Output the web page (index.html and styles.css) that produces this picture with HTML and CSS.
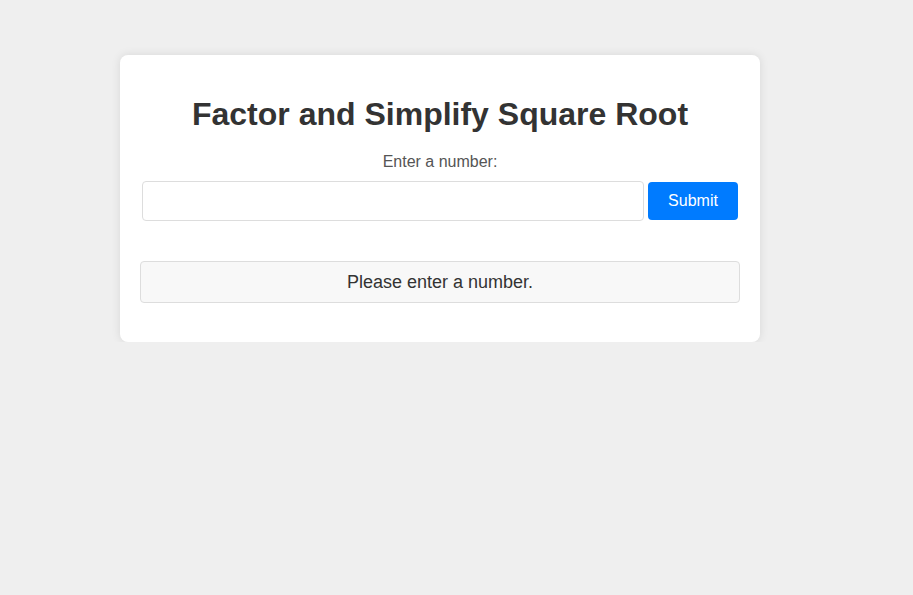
FILE: index.html
```html
<!DOCTYPE html>
<html>
<head>
<meta charset="utf-8">
<link rel="stylesheet" href="styles.css">
</head>
<body>
<div class="card">
  <h1 class="title">Factor and Simplify Square Root</h1>
  <label class="label" for="num">Enter a number:</label>
  <div class="row">
    <input class="input" id="num" type="text">
    <button class="btn">Submit</button>
  </div>
  <div class="result">Please enter a number.</div>
</div>
</body>
</html>
```
FILE: styles.css
```css
html, body {
  margin: 0;
  background: #efefef;
  font-family: "Liberation Sans", Arial, sans-serif;
}
body {
  padding-top: 55px;
}
.card {
  width: 600px;
  margin-left: 120px;
  padding: 20px;
  background: #fff;
  border-radius: 8px;
  box-shadow: 0 0 10px rgba(0, 0, 0, 0.1);
  text-align: center;
  color: #333;
}
.title {
  font-size: 32px;
  font-weight: bold;
  margin: 21px 0 20px;
  line-height: 37px;
  color: #333;
}
.label {
  display: block;
  font-size: 16px;
  color: #555;
  line-height: 18px;
  margin-bottom: 10px;
}
.row {
  display: flex;
  align-items: center;
  gap: 4px;
  padding: 0 2px;
}
.input {
  flex: 1;
  height: 40px;
  box-sizing: border-box;
  border: 1px solid #ddd;
  border-radius: 4px;
  margin: 0;
  font-size: 16px;
  padding: 0 10px;
}
.btn {
  width: 90px;
  height: 38px;
  box-sizing: border-box;
  border: none;
  border-radius: 4px;
  background: #007bff;
  color: #fff;
  font-size: 16px;
  font-family: "Liberation Sans", Arial, sans-serif;
  margin: 0;
}
.result {
  margin-top: 40px;
  margin-bottom: 19px;
  height: 42px;
  box-sizing: border-box;
  border: 1px solid #ddd;
  border-radius: 4px;
  background: #f8f8f8;
  font-size: 18px;
  line-height: 40px;
  color: #333;
}
```
